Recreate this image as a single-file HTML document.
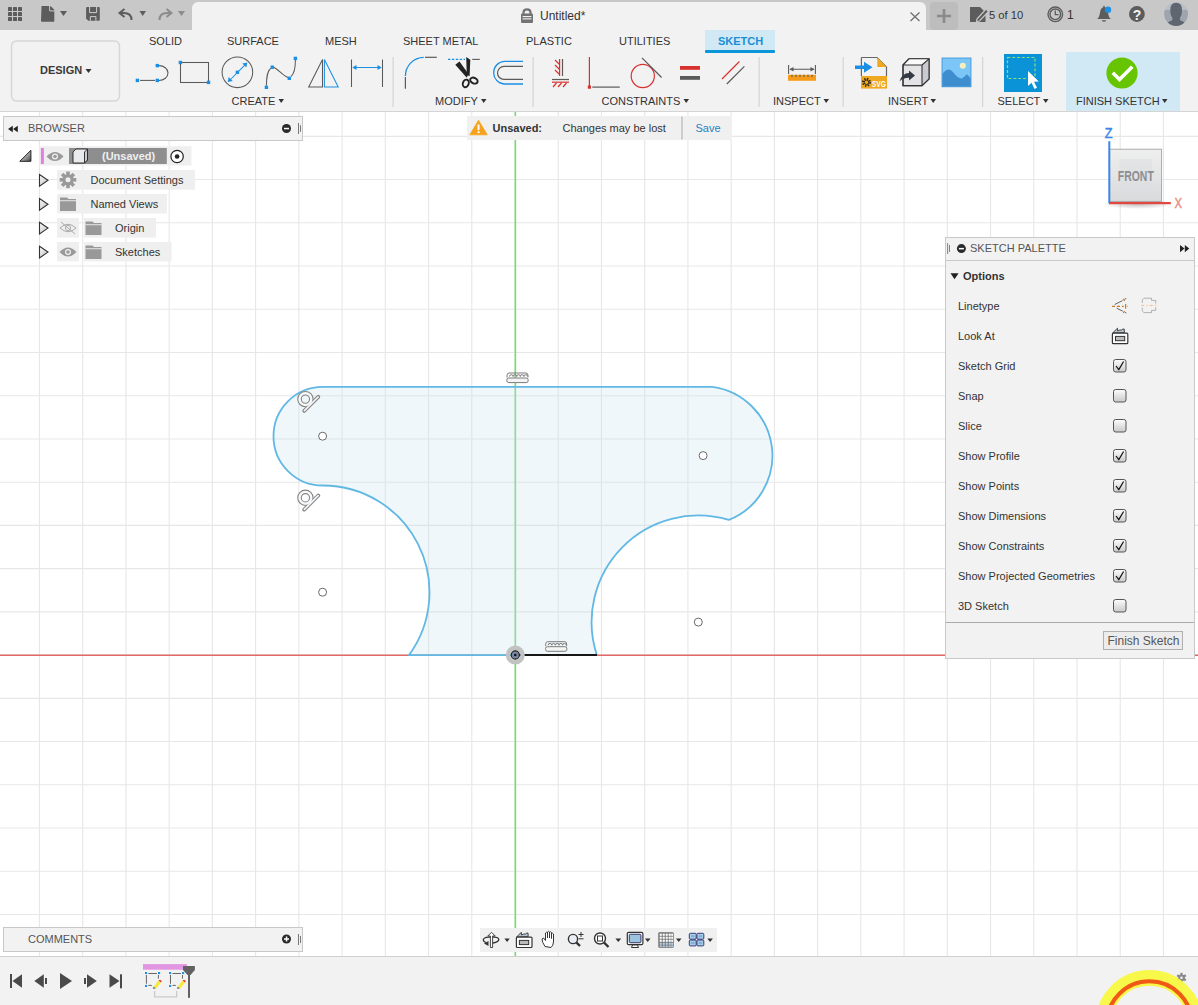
<!DOCTYPE html>
<html><head><meta charset="utf-8">
<style>
*{margin:0;padding:0;box-sizing:border-box}
html,body{width:1198px;height:1005px;overflow:hidden;background:#fff;font-family:"Liberation Sans",sans-serif;color:#3c3c3c}
svg{position:absolute;overflow:visible}
#tabbar{position:absolute;left:0;top:0;width:1198px;height:30px;background:#c8c8c8}
#doctab{position:absolute;left:192px;top:2px;width:734px;height:28px;background:#f2f2f2;border-radius:6px 6px 0 0}
#toolbar{position:absolute;left:0;top:30px;width:1198px;height:82px;background:#f2f2f2;border-bottom:1px solid #d4d4d4}
#canvas{position:absolute;left:0;top:112px;width:1198px;height:844px;background:#fff;overflow:hidden}
#timeline{position:absolute;left:0;top:956px;width:1198px;height:49px;background:#f2f2f2;border-top:1px solid #cfcfcf}
.t{position:absolute;white-space:nowrap;line-height:1}
</style></head><body>
<div id="canvas">
<svg width="1198" height="844" style="left:0;top:0">
<g stroke="#e7e7e7" stroke-width="1.1">
<line x1="39.47" y1="0" x2="39.47" y2="844"/>
<line x1="82.70" y1="0" x2="82.70" y2="844"/>
<line x1="125.93" y1="0" x2="125.93" y2="844"/>
<line x1="169.16" y1="0" x2="169.16" y2="844"/>
<line x1="212.39" y1="0" x2="212.39" y2="844"/>
<line x1="255.62" y1="0" x2="255.62" y2="844"/>
<line x1="298.85" y1="0" x2="298.85" y2="844"/>
<line x1="342.08" y1="0" x2="342.08" y2="844"/>
<line x1="385.31" y1="0" x2="385.31" y2="844"/>
<line x1="428.54" y1="0" x2="428.54" y2="844"/>
<line x1="471.77" y1="0" x2="471.77" y2="844"/>
<line x1="515.00" y1="0" x2="515.00" y2="844"/>
<line x1="558.23" y1="0" x2="558.23" y2="844"/>
<line x1="601.46" y1="0" x2="601.46" y2="844"/>
<line x1="644.69" y1="0" x2="644.69" y2="844"/>
<line x1="687.92" y1="0" x2="687.92" y2="844"/>
<line x1="731.15" y1="0" x2="731.15" y2="844"/>
<line x1="774.38" y1="0" x2="774.38" y2="844"/>
<line x1="817.61" y1="0" x2="817.61" y2="844"/>
<line x1="860.84" y1="0" x2="860.84" y2="844"/>
<line x1="904.07" y1="0" x2="904.07" y2="844"/>
<line x1="947.30" y1="0" x2="947.30" y2="844"/>
<line x1="990.53" y1="0" x2="990.53" y2="844"/>
<line x1="1033.76" y1="0" x2="1033.76" y2="844"/>
<line x1="1076.99" y1="0" x2="1076.99" y2="844"/>
<line x1="1120.22" y1="0" x2="1120.22" y2="844"/>
<line x1="1163.45" y1="0" x2="1163.45" y2="844"/>
<line x1="0" y1="802.48" x2="1198" y2="802.48"/>
<line x1="0" y1="759.25" x2="1198" y2="759.25"/>
<line x1="0" y1="716.02" x2="1198" y2="716.02"/>
<line x1="0" y1="672.79" x2="1198" y2="672.79"/>
<line x1="0" y1="629.56" x2="1198" y2="629.56"/>
<line x1="0" y1="586.33" x2="1198" y2="586.33"/>
<line x1="0" y1="543.10" x2="1198" y2="543.10"/>
<line x1="0" y1="499.87" x2="1198" y2="499.87"/>
<line x1="0" y1="456.64" x2="1198" y2="456.64"/>
<line x1="0" y1="413.41" x2="1198" y2="413.41"/>
<line x1="0" y1="370.18" x2="1198" y2="370.18"/>
<line x1="0" y1="326.95" x2="1198" y2="326.95"/>
<line x1="0" y1="283.72" x2="1198" y2="283.72"/>
<line x1="0" y1="240.49" x2="1198" y2="240.49"/>
<line x1="0" y1="197.26" x2="1198" y2="197.26"/>
<line x1="0" y1="154.03" x2="1198" y2="154.03"/>
<line x1="0" y1="110.80" x2="1198" y2="110.80"/>
<line x1="0" y1="67.57" x2="1198" y2="67.57"/>
<line x1="0" y1="24.34" x2="1198" y2="24.34"/>
</g>
</svg>
<svg width="1198" height="1005" style="left:0;top:-112px">
<line x1="0" y1="655.15" x2="1198" y2="655.15" stroke="#e26868" stroke-width="1.5"/>
<line x1="515.35" y1="112" x2="515.35" y2="956" stroke="#74de6e" stroke-width="1.6"/>
<path d="M322.80 386.9 L712.20 386.9 A69.3 69.3 0 0 1 728.95 519.90 A106.7 106.7 0 0 0 596.83 655.1 L408.99 655.1 A106.7 106.7 0 0 0 322.80 485.50 A49.3 49.3 0 0 1 273.50 436.2 A49.3 49.3 0 0 1 322.80 386.9 Z" fill="#c8e2f2" fill-opacity="0.28" stroke="#60b8e3" stroke-width="1.8"/>
<line x1="519" y1="655" x2="597" y2="655" stroke="#161616" stroke-width="1.8"/>
<g fill="#fff" stroke="#6a6a6a" stroke-width="1">
<circle cx="322.6" cy="436.2" r="4"/>
<circle cx="322.6" cy="592.2" r="4"/>
<circle cx="703.1" cy="455.6" r="4"/>
<circle cx="698.3" cy="622.1" r="4"/>
</g>
<circle cx="515.3" cy="655" r="7.3" fill="none" stroke="#c2c2c2" stroke-width="4.4"/>
<circle cx="515.3" cy="655" r="4.1" fill="#7886a6" stroke="#222" stroke-width="1.2"/>
<circle cx="515.3" cy="655" r="1.3" fill="#111"/>
</svg>
<!--CANVAS-->
<!-- notification -->
<div style="position:absolute;left:467px;top:4px;width:265px;height:24px;background:#f0f0f0"></div>
<svg width="1198" height="1005" style="left:0;top:-112px">
<path d="M478.5 120.3 L487.3 134.8 L469.8 134.8 Z" fill="#f5a31f" stroke="#f5a31f" stroke-width="0.8" stroke-linejoin="round"/>
<rect x="477.6" y="124.5" width="1.9" height="5.6" fill="#fff"/><rect x="477.6" y="131.2" width="1.9" height="1.9" fill="#fff"/>
<rect x="681" y="116.5" width="2" height="23" fill="#cdcdcd"/>
<!-- viewcube -->
<defs>
<linearGradient id="cg" x1="0" y1="0" x2="0" y2="1"><stop offset="0" stop-color="#efefef"/><stop offset="1" stop-color="#d9dadc"/></linearGradient>
<radialGradient id="sh" cx="0.5" cy="0.5" r="0.5"><stop offset="0" stop-color="#000" stop-opacity="0.25"/><stop offset="1" stop-color="#000" stop-opacity="0"/></radialGradient>
</defs>
<ellipse cx="1138" cy="204" rx="36" ry="5" fill="url(#sh)"/>
<rect x="1109.6" y="149.2" width="52" height="52.2" fill="url(#cg)" stroke="#a3a3a3" stroke-width="0.9"/>
<rect x="1119.5" y="159" width="32.5" height="32.5" fill="#dcdde0" opacity="0.5"/>
<text x="1117.8" y="180.6" font-family="Liberation Sans" font-weight="bold" font-size="14" fill="#8d8e92" textLength="36" lengthAdjust="spacingAndGlyphs">FRONT</text>
<rect x="1108.3" y="141.2" width="2" height="62" fill="#3b86e8"/>
<rect x="1109" y="202" width="61.8" height="2.2" fill="#e2483f"/>
<text x="1104.8" y="138" font-family="Liberation Sans" font-size="14" fill="#3b86e8" stroke="#3b86e8" stroke-width="0.5" textLength="7.8" lengthAdjust="spacingAndGlyphs">Z</text>
<text x="1174.5" y="207.5" font-family="Liberation Sans" font-size="14" fill="#e8928c" stroke="#e8928c" stroke-width="0.5" textLength="7.5" lengthAdjust="spacingAndGlyphs">X</text>
<!-- constraint glyphs -->
<g fill="none" stroke="#858585">
<circle cx="305.4" cy="399.1" r="5.9" stroke-width="4.6"/>
<path d="M304.2 410.9 L318.3 396.8" stroke-width="3.8" stroke-linecap="round"/>
<circle cx="305.4" cy="497.8" r="5.9" stroke-width="4.6"/>
<path d="M304.2 509.6 L318.3 495.5" stroke-width="3.8" stroke-linecap="round"/>
</g>
<g fill="none" stroke="#f6f8fa">
<circle cx="305.4" cy="399.1" r="5.9" stroke-width="2.4"/>
<path d="M304.4 410.7 L318.1 397" stroke-width="1.7" stroke-linecap="round"/>
<circle cx="305.4" cy="497.8" r="5.9" stroke-width="2.4"/>
<path d="M304.4 509.4 L318.1 495.7" stroke-width="1.7" stroke-linecap="round"/>
</g>
<!-- horizontal constraint glyphs -->
<g fill="#f4f4f4" stroke="#7a7a7a" stroke-width="1">
<rect x="506.8" y="378" width="21.4" height="4.6" rx="2"/>
<rect x="545.5" y="646.7" width="21.4" height="4.6" rx="2"/>
</g>
<g fill="none" stroke="#7a7a7a" stroke-width="1">
<path d="M507 377.5 L507 375.5 Q507 373 509 373 L526 373 Q528 373 528 375.5 L528 377.5"/>
<path d="M509.5 376.5 A1.8 1.8 0 0 1 513.1 376.5 A1.8 1.8 0 0 1 516.7 376.5 A1.8 1.8 0 0 1 520.3 376.5 A1.8 1.8 0 0 1 523.9 376.5 A1.8 1.8 0 0 1 527.5 376.5"/>
<path d="M545.7 646.2 L545.7 644.2 Q545.7 641.7 547.7 641.7 L564.7 641.7 Q566.7 641.7 566.7 644.2 L566.7 646.2"/>
<path d="M548.2 645.2 A1.8 1.8 0 0 1 551.8 645.2 A1.8 1.8 0 0 1 555.4 645.2 A1.8 1.8 0 0 1 559 645.2 A1.8 1.8 0 0 1 562.6 645.2 A1.8 1.8 0 0 1 566.2 645.2"/>
</g>
</svg>
<div class="t" style="left:492.5px;top:10.5px;font-size:11px;font-weight:bold;color:#333">Unsaved:</div>
<div class="t" style="left:562.5px;top:10.5px;font-size:11px;color:#333">Changes may be lost</div>
<div class="t" style="left:695.5px;top:10.5px;font-size:11px;color:#2a7fc0">Save</div>
<!-- sketch palette -->
<div style="position:absolute;left:945px;top:124.5px;width:250px;height:422px;background:#f2f2f2;border:1px solid #c9c9c9"></div>
<div style="position:absolute;left:946px;top:148px;width:248px;height:1px;background:#c9c9c9"></div>
<div style="position:absolute;left:946px;top:510px;width:248px;height:1px;background:#ababab"></div>
<div style="position:absolute;left:1103px;top:519px;width:80px;height:19px;background:#ececec;border:1px solid #b0b0b0"></div>
<div class="t" style="left:1107.5px;top:522.5px;font-size:12px;color:#555">Finish Sketch</div>
<div class="t" style="left:970px;top:130.7px;font-size:11px;color:#555">SKETCH PALETTE</div>
<div class="t" style="left:963px;top:158.7px;font-size:11px;font-weight:bold;color:#333">Options</div>
<div style="position:absolute;left:958px;top:178.8px;font-size:11px;color:#333;line-height:30px;white-space:nowrap">Linetype<br>Look At<br>Sketch Grid<br>Snap<br>Slice<br>Show Profile<br>Show Points<br>Show Dimensions<br>Show Constraints<br>Show Projected Geometries<br>3D Sketch</div>
<svg width="1198" height="1005" style="left:0;top:-112px">
<defs><linearGradient id="cb" x1="0" y1="0" x2="0" y2="1"><stop offset="0" stop-color="#fdfdfd"/><stop offset="1" stop-color="#c9c9c9"/></linearGradient></defs>
<rect x="947.2" y="243" width="0.9" height="11" fill="#777"/><rect x="949" y="245" width="0.9" height="7" fill="#777"/>
<circle cx="961.4" cy="248.6" r="4.5" fill="#2a2a2a"/><rect x="958.9" y="247.9" width="5" height="1.5" fill="#fff"/>
<path d="M1180 245 L1184.5 248.6 L1180 252.2 Z M1184.8 245 L1189.3 248.6 L1184.8 252.2 Z" fill="#222"/>
<path d="M950.5 273.2 L958.6 273.2 L954.55 279.2 Z" fill="#222"/>
<g id="cbx">
<rect x="1113.5" y="359.5" width="12.5" height="12.5" rx="2.2" fill="url(#cb)" stroke="#555" stroke-width="1"/>
</g>
<rect x="1113.5" y="389.5" width="12.5" height="12.5" rx="2.2" fill="url(#cb)" stroke="#555" stroke-width="1"/>
<rect x="1113.5" y="419.5" width="12.5" height="12.5" rx="2.2" fill="url(#cb)" stroke="#555" stroke-width="1"/>
<rect x="1113.5" y="449.5" width="12.5" height="12.5" rx="2.2" fill="url(#cb)" stroke="#555" stroke-width="1"/>
<rect x="1113.5" y="479.5" width="12.5" height="12.5" rx="2.2" fill="url(#cb)" stroke="#555" stroke-width="1"/>
<rect x="1113.5" y="509.5" width="12.5" height="12.5" rx="2.2" fill="url(#cb)" stroke="#555" stroke-width="1"/>
<rect x="1113.5" y="539.5" width="12.5" height="12.5" rx="2.2" fill="url(#cb)" stroke="#555" stroke-width="1"/>
<rect x="1113.5" y="569.5" width="12.5" height="12.5" rx="2.2" fill="url(#cb)" stroke="#555" stroke-width="1"/>
<rect x="1113.5" y="599.5" width="12.5" height="12.5" rx="2.2" fill="url(#cb)" stroke="#555" stroke-width="1"/>
<g fill="none" stroke="#111" stroke-width="1.2">
<path d="M1116 366 L1118.8 369.6 L1123.6 361.5"/>
<path d="M1116 456 L1118.8 459.6 L1123.6 451.5"/>
<path d="M1116 486 L1118.8 489.6 L1123.6 481.5"/>
<path d="M1116 516 L1118.8 519.6 L1123.6 511.5"/>
<path d="M1116 546 L1118.8 549.6 L1123.6 541.5"/>
<path d="M1116 576 L1118.8 579.6 L1123.6 571.5"/>
</g>
<g fill="none" stroke="#cf7a22" stroke-width="1.2">
<path d="M1112 306.4 L1127.5 306.4" stroke-dasharray="3 2 3 2 1.7 3.3"/>
<path d="M1125.6 304 L1125.6 308.8"/>
<path d="M1123.2 298.8 L1124.6 300.8 M1123.2 313 L1124.6 311"/>
</g>
<g fill="none" stroke="#555" stroke-width="0.9">
<path d="M1114.7 304.5 L1122.5 300.6 M1124.5 299.3 L1126.3 298.5"/>
<path d="M1116.7 308.2 L1122.8 311.2 M1124.8 312.3 L1126.3 313"/>
</g>
<path d="M1142.3 303 L1142.3 299.9 L1144 298.2 L1151.5 298.2 L1151.5 300.4 L1155.7 300.4 L1155.7 303.5 M1155.7 307.2 L1155.7 310.4 L1151.5 310.4 L1151.5 312.6 L1144 312.6 L1142.3 311 L1142.3 307.5" fill="none" stroke="#aaa" stroke-width="0.9"/>
<path d="M1141.2 305.4 L1156.8 305.4" stroke="#f0b888" stroke-width="0.9" stroke-dasharray="3 2 1.5 2"/>
<path d="M1112.6 333 L1117.5 328.2 L1117.7 331 Q1120 329.5 1121.5 330 Q1123 328.6 1124.2 329 L1124.4 332.6 Z" fill="#b8c4d0" stroke="#333" stroke-width="0.9"/>
<rect x="1112.4" y="333.2" width="15.4" height="10.5" rx="1" fill="#fff" stroke="#333" stroke-width="1.2"/>
<rect x="1115.5" y="336.4" width="9.2" height="4.3" fill="#bbb" stroke="#333" stroke-width="1"/>
</svg>
<!-- comments -->
<div style="position:absolute;left:3px;top:815px;width:300px;height:25px;background:#f2f2f2;border:1px solid #c8c8c8"></div>
<div class="t" style="left:28px;top:821.7px;font-size:11px;color:#555">COMMENTS</div>
<!-- navbar -->
<div style="position:absolute;left:480px;top:815.5px;width:237px;height:24px;background:#f0f0f0"></div>
<svg width="1198" height="1005" style="left:0;top:-112px">
<circle cx="286.5" cy="939" r="4.5" fill="#2a2a2a"/><rect x="284" y="938.3" width="5" height="1.5" fill="#fff"/><rect x="285.8" y="936.5" width="1.5" height="5" fill="#fff"/>
<rect x="298" y="934" width="1" height="11" fill="#777"/><rect x="300" y="936" width="1" height="7" fill="#777"/>
<g fill="none" stroke="#333" stroke-width="1">
<path d="M486 942.5 Q482.5 941 483.5 939 Q485 936.8 491.5 936.8 Q498.5 936.8 498.8 939.3 Q499 942 493 943" stroke-width="1.3"/>
<path d="M490.4 947.5 L490.4 936 L487.8 936 L491.5 932.3 L495.2 936 L492.6 936 L492.6 947.5 Z" fill="#fff" stroke-width="0.9"/>
<path d="M484 943.5 L488.5 941 L488.5 946 Z" fill="#333" stroke="none"/>
<path d="M516.6 937 L521.3 932.3 L521.5 935 Q524 933.5 525.5 934 Q527 932.6 528 933 L528.2 936.6 Z" fill="#b8c4d0" stroke="#333" stroke-width="0.9"/>
<rect x="516.4" y="937.1" width="15.6" height="10.4" rx="1" fill="#fff" stroke="#333" stroke-width="1.2"/>
<rect x="519.4" y="940.4" width="9.3" height="4.2" fill="#bbb" stroke="#333" stroke-width="1"/>
<path d="M545 946.5 Q542 942 542 939 L543.5 938 L545.5 940.5 L545.5 933 Q546.5 931.5 547.5 933 L547.5 938 L547.5 932 Q548.5 930.5 549.5 932 L549.5 938 L549.5 932.5 Q550.5 931 551.5 932.5 L551.5 938.5 L551.5 934 Q552.5 932.5 553.5 934 L553.5 942 Q553 946 551 947.5 Z" fill="#fff"/>
<circle cx="573" cy="939" r="4.6" stroke-width="1.4" fill="#e8eef4"/>
<path d="M576.3 942.3 L580 946" stroke-width="2.4"/>
<path d="M578.5 934.5 L583.5 934.5 M581 932 L581 937 M578.5 938.8 L583.5 938.8"/>
<circle cx="600" cy="938.5" r="5.5" stroke-width="1.4" fill="#fff"/>
<rect x="597.5" y="936" width="5" height="5"/>
<path d="M604 942.5 L608.5 947" stroke-width="2.4"/>
<rect x="627.3" y="932.3" width="15.6" height="12.4" rx="1.5" fill="#f4f4f4" stroke-width="1.2"/>
<rect x="629.3" y="934.3" width="11.6" height="8.4" rx="1" fill="#9cc4e0" stroke="#3a3a6a" stroke-width="1"/>
<path d="M631.5 947.5 L638.5 947.5 L637.5 945 L632.5 945 Z" fill="#fff" stroke-width="1"/>
</g>
<rect x="658.3" y="932.3" width="15.4" height="15.4" rx="1.2" fill="#6a6a6a"/>
<g fill="#fff">
<rect x="659.6" y="933.6" width="2.2" height="2.2"/><rect x="662.6" y="933.6" width="2.2" height="2.2"/><rect x="665.6" y="933.6" width="2.2" height="2.2"/><rect x="668.6" y="933.6" width="2.2" height="2.2"/><rect x="671.2" y="933.6" width="1.8" height="2.2"/>
<rect x="659.6" y="936.6" width="2.2" height="2.2"/><rect x="662.6" y="936.6" width="2.2" height="2.2"/><rect x="665.6" y="936.6" width="2.2" height="2.2"/><rect x="668.6" y="936.6" width="2.2" height="2.2"/><rect x="671.2" y="936.6" width="1.8" height="2.2"/>
<rect x="659.6" y="939.6" width="2.2" height="2.2"/><rect x="662.6" y="939.6" width="2.2" height="2.2"/><rect x="665.6" y="939.6" width="2.2" height="2.2"/><rect x="668.6" y="939.6" width="2.2" height="2.2"/><rect x="671.2" y="939.6" width="1.8" height="2.2"/>
</g>
<g fill="#b8cde0">
<rect x="659.6" y="942.6" width="2.2" height="2.2"/><rect x="662.6" y="942.6" width="2.2" height="2.2"/><rect x="665.6" y="942.6" width="2.2" height="2.2"/><rect x="668.6" y="942.6" width="2.2" height="2.2"/><rect x="671.2" y="942.6" width="1.8" height="2.2"/>
<rect x="659.6" y="945.4" width="2.2" height="1.6"/><rect x="662.6" y="945.4" width="2.2" height="1.6"/><rect x="665.6" y="945.4" width="2.2" height="1.6"/><rect x="668.6" y="945.4" width="2.2" height="1.6"/><rect x="671.2" y="945.4" width="1.8" height="1.6"/>
</g>
<g stroke="#3a3a7a" stroke-width="1" fill="#a8cde8">
<rect x="689.3" y="933.3" width="6.9" height="5.9" rx="1"/><rect x="696.9" y="933.3" width="6.9" height="5.9" rx="1"/>
<rect x="689.3" y="940" width="6.9" height="5.9" rx="1"/><rect x="696.9" y="940" width="6.9" height="5.9" rx="1"/>
</g>
<g fill="#7fb0d8"><rect x="691" y="935.2" width="3.5" height="2"/><rect x="698.6" y="935.2" width="3.5" height="2"/><rect x="691" y="941.9" width="3.5" height="2"/><rect x="698.6" y="941.9" width="3.5" height="2"/></g>
<g fill="#333">
<path d="M504.4 938.5 L509.8 938.5 L507.1 942 Z"/>
<path d="M615.4 938.5 L621.2 938.5 L618.3 942 Z"/>
<path d="M645 938.5 L650.5 938.5 L647.7 942 Z"/>
<path d="M676 938.5 L681.5 938.5 L678.7 942 Z"/>
<path d="M707.3 938.5 L712.9 938.5 L710.1 942 Z"/>
</g>
</svg>
<!--CANVAS-->
<div style="position:absolute;left:3px;top:4px;width:300px;height:25px;background:#f2f2f2;border:1px solid #c8c8c8"></div>
<svg width="1198" height="1005" style="left:0;top:-112px">
<path d="M8 129 L12.8 125.8 L12.8 132.2 Z M13 129 L17.8 125.8 L17.8 132.2 Z" fill="#222"/>
<circle cx="286.5" cy="128.5" r="4.5" fill="#2a2a2a"/>
<rect x="284" y="127.8" width="5" height="1.5" fill="#fff"/>
<rect x="298" y="123" width="1" height="11" fill="#777"/><rect x="300" y="125.3" width="1" height="6.5" fill="#777"/>
<!-- row1 -->
<rect x="39.5" y="146.2" width="152" height="19.3" fill="#efefef"/>
<defs><linearGradient id="tg" x1="0" y1="0" x2="1" y2="1"><stop offset="0.2" stop-color="#eee"/><stop offset="1" stop-color="#444"/></linearGradient><linearGradient id="eg" x1="0" y1="0" x2="1" y2="1"><stop offset="0" stop-color="#fff"/><stop offset="1" stop-color="#bbb"/></linearGradient></defs>
<path d="M19.8 161.3 L30.9 150.3 L30.9 161.3 Z" fill="url(#tg)" stroke="#222" stroke-width="1"/>
<rect x="40.9" y="148" width="3" height="16" fill="#e07fe0"/>
<path d="M46.5 156.5 Q55 147.5 63.5 156.5 Q55 165.5 46.5 156.5 Z" fill="#9a9a9a"/>
<circle cx="55" cy="156.5" r="3" fill="#efefef"/><circle cx="55" cy="156.5" r="1.8" fill="#9a9a9a"/>
<rect x="69" y="148" width="97.8" height="16" fill="#8e8e8e"/>
<path d="M73 152 L76 149 L87.5 149 L87.5 160 L84.5 163 L73 163 Z" fill="#e8eaee" stroke="#222" stroke-width="0.9"/>
<path d="M84.5 152 L87.5 149 L87.5 160 L84.5 163 Z" fill="#c6cad2" stroke="#222" stroke-width="0.9"/>
<circle cx="177.1" cy="156.5" r="6.2" fill="#fff" stroke="#222" stroke-width="1.2"/>
<circle cx="177.1" cy="156.5" r="2.3" fill="#222"/>
<!-- row2 -->
<rect x="57" y="170" width="138" height="19.7" fill="#efefef"/>
<path d="M39.5 174.5 L48 180.3 L39.5 186.1 Z" fill="url(#eg)" stroke="#333" stroke-width="1.1"/>
<g transform="translate(68 179.8)" fill="#999">
<circle r="5.6"/>
<rect x="-1.8" y="-8.3" width="3.6" height="16.6"/>
<rect x="-1.8" y="-8.3" width="3.6" height="16.6" transform="rotate(45)"/>
<rect x="-1.8" y="-8.3" width="3.6" height="16.6" transform="rotate(90)"/>
<rect x="-1.8" y="-8.3" width="3.6" height="16.6" transform="rotate(135)"/>
<circle r="2.5" fill="#efefef"/>
</g>
<!-- row3 -->
<rect x="57" y="194" width="110" height="19.5" fill="#efefef"/>
<path d="M39.5 198.5 L48 204.3 L39.5 210.1 Z" fill="url(#eg)" stroke="#333" stroke-width="1.1"/>
<path d="M60 197.5 L67 197.5 L68.5 199 L76 199 L76 211 L60 211 Z" fill="#999"/>
<rect x="60" y="200.3" width="16" height="0.9" fill="#efefef"/>
<!-- row4 -->
<rect x="57" y="218" width="22" height="19.6" fill="#efefef"/>
<rect x="84" y="218" width="72" height="19.6" fill="#efefef"/>
<path d="M39.5 222.3 L48 228.1 L39.5 233.9 Z" fill="url(#eg)" stroke="#333" stroke-width="1.1"/>
<path d="M60 228 Q68 220.5 76 228 Q68 235.5 60 228 Z" fill="none" stroke="#aaa" stroke-width="1"/>
<circle cx="68" cy="228" r="2.6" fill="none" stroke="#aaa" stroke-width="1"/>
<path d="M61 222 L75 234" stroke="#aaa" stroke-width="1"/>
<path d="M85.5 221.5 L92.5 221.5 L94 223 L101.5 223 L101.5 235 L85.5 235 Z" fill="#999"/>
<rect x="85.5" y="224.3" width="16" height="0.9" fill="#efefef"/>
<!-- row5 -->
<rect x="57" y="242" width="22" height="19.4" fill="#efefef"/>
<rect x="84" y="242" width="87.6" height="19.4" fill="#efefef"/>
<path d="M39.5 246.3 L48 252.1 L39.5 257.9 Z" fill="url(#eg)" stroke="#333" stroke-width="1.1"/>
<path d="M59.5 252 Q68 243 76.5 252 Q68 261 59.5 252 Z" fill="#999"/>
<circle cx="68" cy="252" r="3" fill="#efefef"/><circle cx="68" cy="252" r="1.8" fill="#999"/>
<path d="M85.5 245.5 L92.5 245.5 L94 247 L101.5 247 L101.5 259 L85.5 259 Z" fill="#999"/>
<rect x="85.5" y="248.3" width="16" height="0.9" fill="#efefef"/>
</svg>
<div class="t" style="left:28px;top:10.7px;font-size:11px;color:#555">BROWSER</div>
<div class="t" style="left:102px;top:39px;font-size:11px;font-weight:bold;color:#eeeeee">(Unsaved)</div>
<div class="t" style="left:90.5px;top:62.7px;font-size:11px;color:#333">Document Settings</div>
<div class="t" style="left:90.5px;top:86.7px;font-size:11px;color:#333">Named Views</div>
<div class="t" style="left:115px;top:110.7px;font-size:11px;color:#333">Origin</div>
<div class="t" style="left:115px;top:134.7px;font-size:11px;color:#333">Sketches</div>

</div>
<div id="tabbar"><div id="doctab"></div>
<svg width="1198" height="30" style="left:0;top:0">
<g fill="#5c5c5c">
<rect x="8" y="7" width="4" height="4" rx=".6"/><rect x="13" y="7" width="4" height="4" rx=".6"/><rect x="18" y="7" width="4" height="4" rx=".6"/>
<rect x="8" y="12" width="4" height="4" rx=".6"/><rect x="13" y="12" width="4" height="4" rx=".6"/><rect x="18" y="12" width="4" height="4" rx=".6"/>
<rect x="8" y="17" width="4" height="4" rx=".6"/><rect x="13" y="17" width="4" height="4" rx=".6"/><rect x="18" y="17" width="4" height="4" rx=".6"/>
<path d="M41.5 7 Q41 6 42 6 L50 6 L54.3 10.5 L54.3 21 Q54.3 21.7 53.6 21.7 L42 21.7 Q41 21.7 41 21 Z"/>
<path d="M60 11 L67 11 L63.5 16 Z"/>
<path d="M86.1 8 Q86.1 7 87.1 7 L98.8 7 Q99.8 7 99.8 8 L99.8 19.8 Q99.8 20.8 98.8 20.8 L88.3 20.8 L86.1 18.6 Z"/>
<path d="M139.5 11 L146 11 L142.7 16 Z"/>
</g>
<path d="M49.6 5.5 L49.6 10.9 L55 10.9" fill="none" stroke="#c8c8c8" stroke-width="1"/><path d="M50.6 6 L54.5 9.9 L50.6 9.9 Z" fill="#5c5c5c"/>
<path d="M89.6 7 L89.6 12.6 L96.6 12.6 L96.6 7 M90.3 20.8 L90.3 16.6 L95.9 16.6 L95.9 20.8" fill="none" stroke="#cfcfcf" stroke-width="1"/>
<path d="M131.5 20 Q131.5 13 124 13 L121 13" fill="none" stroke="#5c5c5c" stroke-width="2"/>
<path d="M124.5 9 L119.5 13 L124.5 17" fill="none" stroke="#5c5c5c" stroke-width="2"/>
<path d="M159.5 20 Q159.5 13 167 13 L170 13" fill="none" stroke="#8c8c8c" stroke-width="2"/>
<path d="M166.5 9 L171.5 13 L166.5 17" fill="none" stroke="#8c8c8c" stroke-width="2"/>
<path d="M178 11 L185 11 L181.5 16 Z" fill="#8c8c8c"/>
<g fill="#737373">
<path d="M523.5 14 L523.5 12.5 Q523.5 9.3 527 9.3 Q530.5 9.3 530.5 12.5 L530.5 14" fill="none" stroke="#737373" stroke-width="2.2"/>
<rect x="521" y="13.6" width="12" height="9.3" rx="1"/>
</g>
<g fill="#f2f2f2"><rect x="522.6" y="16" width="8.8" height="1.1"/><rect x="522.6" y="18.3" width="8.8" height="1.1"/></g>
<path d="M910.5 12.5 L919.5 21 M919.5 12.5 L910.5 21" stroke="#707070" stroke-width="1.3"/>
<rect x="930" y="2" width="28" height="28" rx="4" fill="#bdbdbd"/>
<path d="M944 9 L944 23 M937 16 L951 16" stroke="#8a8a8a" stroke-width="2.6"/>
<g fill="#5c5c5c">
<path d="M970 7 L980 7 L985.5 12.5 L985.5 22 L970 22 Z"/>
</g>
<path d="M977 19 L986 9 L988.5 11.5 L979.5 21 L976.5 21.5 Z" fill="#5c5c5c" stroke="#c8c8c8" stroke-width="1.2"/>
<circle cx="1055.3" cy="14.3" r="7.3" fill="none" stroke="#5c5c5c" stroke-width="1.4"/>
<circle cx="1055.3" cy="14.3" r="5.3" fill="none" stroke="#5c5c5c" stroke-width="1.4"/>
<path d="M1055.3 10.5 L1055.3 14.6 L1058.6 14.6" fill="none" stroke="#5c5c5c" stroke-width="1.3"/>
<path d="M1097.2 19 Q1099.5 17 1100 13 Q1100.3 8.5 1103.2 7.2 L1103.5 5.8 L1104.5 5.8 L1104.8 7.2 Q1107.7 8.5 1108 13 Q1108.5 17 1110.8 19 Z" fill="#5c5c5c"/>
<path d="M1101.7 20.3 L1106.3 20.3 Q1105.5 21.8 1104 21.8 Q1102.5 21.8 1101.7 20.3 Z" fill="#5c5c5c"/>
<circle cx="1108" cy="9.7" r="3.2" fill="#1e90e6"/>
<circle cx="1136.9" cy="14" r="7.9" fill="#5c5c5c"/>
<defs><clipPath id="av"><circle cx="1176.1" cy="14" r="11.9"/></clipPath></defs>
<g clip-path="url(#av)">
<rect x="1164" y="2" width="25" height="8" fill="#b8bfc8"/>
<rect x="1164" y="9.9" width="25" height="17" fill="#9ea5af"/>
<path d="M1166 27 Q1166.5 22 1172 20.5 L1172.5 18 Q1170.3 15.5 1170.3 10 Q1170.3 2.8 1176.2 2.8 Q1182 2.8 1182 10 Q1182 15.5 1179.8 18 L1180.3 20.5 Q1185.8 22 1186.3 27 Z" fill="#5f6670"/>
</g>
</svg>
<div class="t" style="left:1132.7px;top:8.2px;font-size:14px;font-weight:bold;color:#f4f4f4">?</div>
<div class="t" style="left:540px;top:10px;font-size:12px;color:#333">Untitled*</div>
<div class="t" style="left:989px;top:9.5px;font-size:11.2px;color:#333">5 of 10</div>
<div class="t" style="left:1067px;top:9px;font-size:12px;color:#333">1</div>

</div>
<div id="toolbar">
<svg width="1198" height="112" style="left:0;top:-30px">
<rect x="11.5" y="41" width="108" height="60" rx="5" fill="none" stroke="#d6d6d6" stroke-width="1.4"/>
<path d="M85.5 69 L91.5 69 L88.5 73 Z" fill="#333"/>
<rect x="705" y="30" width="70" height="23" fill="#d0e9f5"/>
<rect x="705" y="50" width="70" height="3" rx="1" fill="#0a96d8"/>
<rect x="1066" y="52" width="114" height="59" fill="#d0e9f5"/>
<g fill="#d6d6d6">
<rect x="392.5" y="57" width="1.3" height="50"/>
<rect x="532.5" y="57" width="1.3" height="50"/>
<rect x="758.5" y="57" width="1.3" height="50"/>
<rect x="842.5" y="57" width="1.3" height="50"/>
<rect x="982" y="57" width="1.3" height="50"/>
</g>
<g fill="#333">
<path d="M278.5 99 L284 99 L281.2 103 Z"/>
<path d="M481 99 L486.5 99 L483.7 103 Z"/>
<path d="M683.5 99 L689 99 L686.2 103 Z"/>
<path d="M823.5 99 L829 99 L826.2 103 Z"/>
<path d="M930.5 99 L936 99 L933.2 103 Z"/>
<path d="M1043 99 L1048.5 99 L1045.7 103 Z"/>
<path d="M1162 99 L1167.5 99 L1164.7 103 Z"/>
</g>
<!-- CREATE icons -->
<g fill="none" stroke="#5a5a5a" stroke-width="1.05">
<path d="M140 80.4 L155 80.4"/>
<path d="M159 65.6 A9 7.4 0 0 1 159 80.4"/>
<rect x="180.5" y="62.5" width="28" height="20"/>
<circle cx="237.4" cy="72.3" r="15.3"/>
<path d="M266.4 85.5 C266.4 78 268 70 271 68.3 M274 67.5 C278 69 283 76 288 77.5 M291 76.5 C294 74 295.4 66 295.4 60"/>
<path d="M322.5 59.5 L322.5 87 L308.7 87 Z"/>
<path d="M351.5 59.5 L351.5 87 M382.5 59.5 L382.5 87"/>
</g>
<g fill="none" stroke="#1a8fe3" stroke-width="1.05">
<path d="M324.4 59.5 L324.4 87 L338.2 87 Z"/>
<path d="M354 67.5 L380 67.5"/>
<path d="M230.5 79.5 L244.5 65.3"/>
</g>
<g fill="#1a8fe3">
<rect x="135.7" y="78.7" width="3.4" height="3.4"/><rect x="155.6" y="78.7" width="3.4" height="3.4"/><rect x="155.6" y="63.9" width="3.4" height="3.4"/>
<rect x="178.7" y="60.8" width="3.4" height="3.4"/><rect x="206.8" y="80.7" width="3.4" height="3.4"/>
<rect x="235.7" y="70.6" width="3.4" height="3.4"/>
<path d="M247.3 62.5 L246.3 67.5 L242.3 63.5 Z"/><path d="M227.7 82.1 L228.7 77.1 L232.7 81.1 Z"/>
<rect x="264.7" y="85.6" width="3.4" height="3.4"/><rect x="270.6" y="65.5" width="3.4" height="3.4"/><rect x="287.6" y="76.6" width="3.4" height="3.4"/><rect x="293.7" y="56.7" width="3.4" height="3.4"/>
<path d="M352.3 67.5 L356.5 65 L356.5 70 Z"/><path d="M381.7 67.5 L377.5 65 L377.5 70 Z"/>
</g>
<!-- MODIFY icons -->
<path d="M405.4 77 L405.4 88.8" stroke="#5a5a5a" stroke-width="1.2" fill="none"/>
<path d="M405.4 76 A18.5 18.7 0 0 1 423.7 57.3" stroke="#1a8fe3" stroke-width="1.3" fill="none"/>
<path d="M425 57.3 L436.8 57.3" stroke="#5a5a5a" stroke-width="1.2" fill="none"/>
<path d="M448 59.4 L465 59.4" stroke="#1a8fe3" stroke-width="1.1" stroke-dasharray="2.4 1.5" fill="none"/>
<path d="M472.2 59.4 L479.8 59.4" stroke="#5a5a5a" stroke-width="1.1" fill="none"/>
<g fill="#222">
<path d="M466.2 57 L470.3 59.8 L469.6 76 L466.8 76 Z"/>
<path d="M455.3 64.8 L459.5 61.4 L469.2 75 L466.6 77.6 Z"/>
</g>
<g fill="none" stroke="#222" stroke-width="1.9">
<ellipse cx="465.8" cy="83.4" rx="2.9" ry="3.9" transform="rotate(20 465.8 83.4)"/>
<ellipse cx="473.9" cy="80.6" rx="3.9" ry="2.8" transform="rotate(25 473.9 80.6)"/>
</g>
<circle cx="468.2" cy="76.5" r="0.9" fill="#f2f2f2"/>
<path d="M523 61.3 L504 61.3 A11.4 11.4 0 0 0 504 84 L523 84" stroke="#1a8fe3" stroke-width="1.3" fill="none"/>
<path d="M523 66.4 L504 66.4 A6.5 6.5 0 0 0 504 79.4 L523 79.4" stroke="#5a5a5a" stroke-width="1.2" fill="none"/>
<!-- CONSTRAINTS -->
<g stroke="#d8322f" stroke-width="1.2" fill="none">
<path d="M559.6 59 L559.6 76"/>
<path d="M555 60 L559.6 64.5 M555 65 L559.6 69.5 M555 70 L559.6 74.5"/>
<path d="M552 82.2 L569 82.2"/>
<path d="M553 87 L556.5 83 M558 87 L561.5 83 M563 87 L566.5 83"/>
<path d="M589.4 57 L589.4 86"/>
<circle cx="642.8" cy="76" r="11.6"/>
<path d="M722 79 L739.4 61.5"/>
</g>
<g stroke="#5a5a5a" stroke-width="1.2" fill="none">
<path d="M562.5 59 L562.5 76"/>
<path d="M552 79.5 L569 79.5"/>
<path d="M592.3 87.1 L619.8 87.1"/>
<path d="M642 57.8 L661.6 77.5"/>
<path d="M726.8 84 L744.4 66.3"/>
</g>
<rect x="587.8" y="85.5" width="3.2" height="3.2" fill="#d8322f"/>
<rect x="680" y="66" width="20" height="3.8" fill="#d8322f"/>
<rect x="680" y="76" width="20" height="3.8" fill="#5a5a5a"/>
<!-- INSPECT -->
<rect x="788" y="74.8" width="28" height="6" fill="#f59c1a"/>
<g stroke="#5a5a5a" stroke-width="1.1" fill="none">
<path d="M788.6 65 L788.6 74 M815.4 65 L815.4 74 M790 69.3 L814 69.3"/>
<path d="M792 74.8 L792 77 M796 74.8 L796 77 M800 74.8 L800 77 M804 74.8 L804 77 M808 74.8 L808 77 M812 74.8 L812 77"/>
</g>
<path d="M789.5 69.3 L793.5 67 L793.5 71.6 Z M814.5 69.3 L810.5 67 L810.5 71.6 Z" fill="#5a5a5a"/>
<!-- INSERT -->
<path d="M861.4 57.5 L877 57.5 L886.5 67 L886.5 76 M861.4 57.5 L861.4 76" stroke="#666" stroke-width="1.2" fill="none"/>
<path d="M877.3 57.6 L886.7 67 L877.3 67 Z" fill="#f0a81e"/>
<rect x="861" y="76" width="26" height="12.6" fill="#f0a81e"/>
<path d="M855 65.5 L864 65.5 L864 61.7 L872.5 67.2 L864 72.8 L864 69 L855 69 Z" fill="#1a8fe3"/>
<circle cx="866.5" cy="82.3" r="3.4" fill="none" stroke="#222" stroke-width="2.2" stroke-dasharray="1.3 1.37"/><circle cx="866.5" cy="82.3" r="2.2" fill="none" stroke="#222" stroke-width="0.9"/>
<text x="871.8" y="86.6" font-family="Liberation Sans" font-weight="bold" font-size="9" fill="#fff" textLength="14" lengthAdjust="spacingAndGlyphs">SVG</text>
<path d="M903 65 L909 58.8 L929 58.8 L929 79 L922 85.6 L903 85.6 Z" fill="#e4e4e6" stroke="#333" stroke-width="1.2"/>
<path d="M922 65 L929 58.8 L929 79 L922 85.6 Z" fill="#c9cbd0" stroke="#333" stroke-width="0"/>
<path d="M903 65 L909 58.8 L929 58.8 L922 65 Z" fill="#fafafa"/>
<path d="M903 65 L909 58.8 L929 58.8 L929 79 L922 85.6 L903 85.6 Z M903 65 L922 65 L922 85.6 M922 65 L929 58.8" fill="none" stroke="#333" stroke-width="1.1"/>
<path d="M899.5 81.5 Q902 73 909 73 L909 70.5 L915 75.5 L909 80.5 L909 77.8 Q903 77.8 899.5 81.5 Z" fill="#333a44"/>
<rect x="942" y="58" width="29" height="28.8" fill="#7cc6f7" stroke="#3a8fd4" stroke-width="0.8"/>
<path d="M942.4 86.5 L942.4 74 Q948 66 953 72 Q958 79 962 78.5 Q966 75 967 74.3 Q969 76 970.6 78.5 L970.6 86.5 Z" fill="#3d8dcf"/>
<circle cx="962.8" cy="65.8" r="3" fill="#f6f0c0"/>
<!-- SELECT -->
<rect x="1004" y="54" width="38" height="38" fill="#0a93d6"/>
<rect x="1007.5" y="57.5" width="27.5" height="21" fill="none" stroke="#8ee07a" stroke-width="1.2" stroke-dasharray="2.8 2"/>
<path d="M1028 71 L1028 86 L1031.5 82.8 L1034.5 89 L1037 87.8 L1034 81.8 L1038.8 81.5 Z" fill="#fff"/>
<circle cx="1122" cy="73" r="15.6" fill="#66c400"/>
<path d="M1114 74 L1119.5 79.5 L1131 68" fill="none" stroke="#fff" stroke-width="3.6" stroke-linecap="square"/>
</svg>
<div class="t" style="left:40px;top:35px;font-size:11px;font-weight:bold;color:#3a3a3a">DESIGN</div>
<div class="t" style="left:149px;top:5.5px;font-size:11px;color:#333">SOLID</div>
<div class="t" style="left:227px;top:5.5px;font-size:11px;color:#333">SURFACE</div>
<div class="t" style="left:325px;top:5.5px;font-size:11px;color:#333">MESH</div>
<div class="t" style="left:403px;top:5.5px;font-size:11px;color:#333">SHEET METAL</div>
<div class="t" style="left:526px;top:5.5px;font-size:11px;color:#333">PLASTIC</div>
<div class="t" style="left:619px;top:5.5px;font-size:11px;color:#333">UTILITIES</div>
<div class="t" style="left:718px;top:5.5px;font-size:11px;font-weight:bold;color:#1a8fd6">SKETCH</div>
<div class="t" style="left:231.5px;top:65.5px;font-size:11px;color:#333">CREATE</div>
<div class="t" style="left:435px;top:65.5px;font-size:11px;color:#333">MODIFY</div>
<div class="t" style="left:601.5px;top:65.5px;font-size:11px;color:#333">CONSTRAINTS</div>
<div class="t" style="left:773px;top:65.5px;font-size:11px;color:#333">INSPECT</div>
<div class="t" style="left:888px;top:65.5px;font-size:11px;color:#333">INSERT</div>
<div class="t" style="left:997.5px;top:65.5px;font-size:11px;color:#333">SELECT</div>
<div class="t" style="left:1076px;top:65.5px;font-size:11px;color:#333">FINISH SKETCH</div>

</div>
<div id="timeline">
<svg width="1198" height="49" style="left:0;top:-957px;overflow:visible">
<g fill="#4a4a4a">
<rect x="10" y="974" width="2" height="14"/><path d="M12.5 981 L22 974.3 L22 987.7 Z"/>
<path d="M34.3 981 L43.8 974.3 L43.8 987.7 Z"/><rect x="45" y="978" width="2" height="6"/>
<path d="M60 973 L72 981 L60 989 Z"/>
<rect x="84" y="978" width="2" height="6"/><path d="M87 974.3 L96.8 981 L87 987.7 Z"/>
<rect x="120" y="974.3" width="2" height="14"/><path d="M109.5 974.3 L119.5 981 L109.5 987.7 Z"/>
</g>
<rect x="143" y="964.1" width="43.9" height="5.6" fill="#e296e2"/>
<g transform="translate(0 0)">
<g stroke="#555" stroke-width="0.9" fill="none"><path d="M148.4 973.5 L156.9 973.5 M146.4 975 L146.4 983.8 M158.4 975 L158.4 978.6 M148.4 985.4 L151.8 985.4"/></g>
<g fill="#1a8fe3"><rect x="145" y="972" width="2.1" height="2.1"/><rect x="158" y="972" width="2.1" height="2.1"/><rect x="145" y="984.9" width="2.1" height="2.1"/></g>
<path d="M153.6 986.8 L158.5 980.6 L161 982.6 L156 988.5 Z" fill="#f6ea3a"/>
<path d="M158.5 980.6 L159.8 979.7 Q161.5 979.8 161.7 981.2 L161 982.6 Z" fill="#e0403a"/>
<path d="M153.6 986.8 L156 988.5 L152.8 988.8 Z" fill="#666"/>
</g>
<g transform="translate(24.07 0)">
<g stroke="#555" stroke-width="0.9" fill="none"><path d="M148.4 973.5 L156.9 973.5 M146.4 975 L146.4 983.8 M158.4 975 L158.4 978.6 M148.4 985.4 L151.8 985.4"/></g>
<g fill="#1a8fe3"><rect x="145" y="972" width="2.1" height="2.1"/><rect x="158" y="972" width="2.1" height="2.1"/><rect x="145" y="984.9" width="2.1" height="2.1"/></g>
<path d="M153.6 986.8 L158.5 980.6 L161 982.6 L156 988.5 Z" fill="#f6ea3a"/>
<path d="M158.5 980.6 L159.8 979.7 Q161.5 979.8 161.7 981.2 L161 982.6 Z" fill="#e0403a"/>
<path d="M153.6 986.8 L156 988.5 L152.8 988.8 Z" fill="#666"/>
</g>
<path d="M154.6 991 L154.6 996.8 L176.7 996.8 L176.7 991" fill="none" stroke="#cacaca" stroke-width="1.3"/>
<path d="M183 966 L194.9 966 L194.9 970 L190.5 975 L187.5 975 L183 970 Z" fill="#626262"/>
<rect x="188" y="973" width="2" height="24.8" fill="#626262"/>
<g transform="translate(1181.5 977.8)" fill="#8a8a8a"><circle r="3.4"/><rect x="-1.1" y="-5" width="2.2" height="10"/><rect x="-1.1" y="-5" width="2.2" height="10" transform="rotate(60)"/><rect x="-1.1" y="-5" width="2.2" height="10" transform="rotate(120)"/><circle r="1.3" fill="#f2f2f2"/></g>
<circle cx="1149.4" cy="1023.8" r="46" fill="none" stroke="#f8f840" stroke-width="15.7" opacity="0.95"/>
<circle cx="1149.4" cy="1023.8" r="42.5" fill="none" stroke="#f05a14" stroke-width="4"/>
</svg>
</div>
</body></html>
